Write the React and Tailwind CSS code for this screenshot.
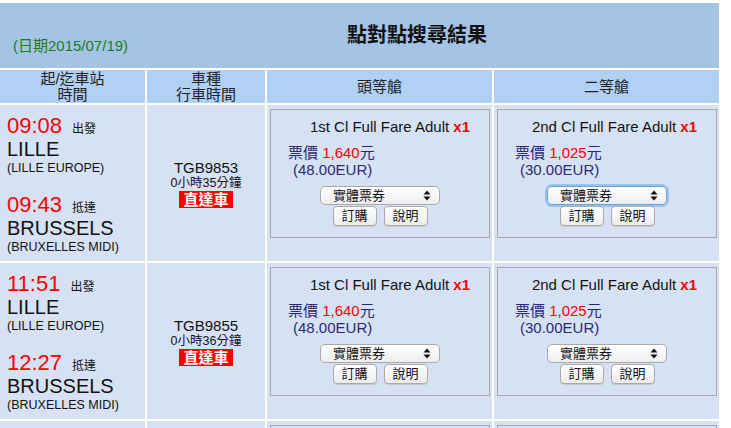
import React from 'react';

const font = { fontFamily: '"Liberation Sans", "Noto Sans CJK TC", sans-serif' };

const trains = [
  { dep: '09:08', arr: '09:43', no: 'TGB9853', dur: '0小時35分鐘', focus: true },
  { dep: '11:51', arr: '12:27', no: 'TGB9855', dur: '0小時36分鐘', focus: false },
];

function Arrows() {
  return (
    <svg width="8" height="11" viewBox="0 0 8 11" className="shrink-0">
      <path d="M4 0.5 L7.5 4.5 L0.5 4.5 Z" fill="#111" />
      <path d="M4 10.5 L7.5 6.5 L0.5 6.5 Z" fill="#111" />
    </svg>
  );
}

function FareBox({ label, price, eur, focus }) {
  return (
    <div className="border border-[#a8a8a8] h-[129px] pt-[8px]">
      <div className="text-right pr-[19px] leading-[17px] text-[15px] text-[#111]">
        {label} <b className="text-[#ff0000]">x1</b>
      </div>
      <div className="mt-[9px] pl-[17px] leading-[17px] text-[15px] text-[#2b2b73]">
        票價 <span className="text-[#ff0000]">{price}</span>元
      </div>
      <div className="pl-[22px] leading-[17px] text-[15px] text-[#2b2b73]">({eur}EUR)</div>
      <div className="mt-[8px] flex justify-center">
        <div
          className={
            'w-[120px] h-[19px] rounded-[5px] flex items-center justify-between pl-[12px] pr-[8px] text-[13px] text-[#111] bg-gradient-to-b from-white to-[#ededed] ' +
            (focus
              ? 'border border-[#6a9fd8] shadow-[0_0_0_2px_#9cc3ec]'
              : 'border border-[#a9a9a9]')
          }
        >
          <span>實體票券</span>
          <Arrows />
        </div>
      </div>
      <div className="mt-[1px] flex justify-center gap-[7px]">
        <div className="w-[44px] h-[20px] rounded-[4px] border border-[#aaaaaa] bg-gradient-to-b from-white to-[#ececec] shadow-[0_1px_0_#c8c8c8] text-[13px] text-[#111] flex items-center justify-center">
          訂購
        </div>
        <div className="w-[44px] h-[20px] rounded-[4px] border border-[#aaaaaa] bg-gradient-to-b from-white to-[#ececec] shadow-[0_1px_0_#c8c8c8] text-[13px] text-[#111] flex items-center justify-center">
          說明
        </div>
      </div>
    </div>
  );
}

function TimeLine({ time, label }) {
  return (
    <div className="h-[25px] flex items-baseline">
      <span className="text-[22px] leading-[25px] text-[#ff0000]">{time}</span>
      <span className="ml-[10px] text-[12px] leading-[14px]">{label}</span>
    </div>
  );
}

function TrainRow({ t }) {
  return (
    <div className="grid grid-cols-[145px_118px_225px_225px] gap-[2px] h-[156px]">
      <div className="bg-[#d6e2f4] pt-[8px] pl-[7px] text-[#111]">
        <TimeLine time={t.dep} label="出發" />
        <div className="h-[23px] text-[20px] leading-[23px]">LILLE</div>
        <div className="h-[14px] text-[12.5px] leading-[14px]">(LILLE EUROPE)</div>
        <div className="h-[17px]" />
        <TimeLine time={t.arr} label="抵達" />
        <div className="h-[23px] text-[20px] leading-[23px]">BRUSSELS</div>
        <div className="h-[14px] text-[12.5px] leading-[14px]">(BRUXELLES MIDI)</div>
      </div>
      <div className="bg-[#d6e2f4] flex flex-col items-center justify-center text-[#111]">
        <div className="text-[15px] leading-[17px]">{t.no}</div>
        <div className="text-[12.5px] leading-[15px]">{t.dur}</div>
        <div className="bg-[#ff0000] text-white font-bold text-[15px] leading-[17px] px-[4px]">直達車</div>
      </div>
      <div className="bg-[#d6e2f4] pt-[4px] pl-[3px] pr-[2px]">
        <FareBox label="1st Cl Full Fare Adult" price="1,640" eur="48.00" />
      </div>
      <div className="bg-[#d6e2f4] pt-[4px] pl-[3px] pr-[2px]">
        <FareBox label="2nd Cl Full Fare Adult" price="1,025" eur="30.00" focus={t.focus} />
      </div>
    </div>
  );
}

export default function App() {
  return (
    <div className="w-[731px] h-[428px] overflow-hidden bg-white pt-[3px]" style={font}>
      <div className="w-[719px] flex flex-col gap-[2px]">
        {/* title */}
        <div className="bg-[#a4c4e6] h-[65px] flex">
          <div className="w-[145px] shrink-0 flex items-end pl-[13px] pb-[11px] text-[15px] text-[#1e7a1e]">
            (日期2015/07/19)
          </div>
          <div className="flex-1 flex items-center pl-[202px] pb-[1px] text-[20px] font-bold text-[#111]">
            點對點搜尋結果
          </div>
        </div>
        {/* header */}
        <div className="grid grid-cols-[145px_118px_225px_225px] gap-[2px] h-[33px] text-[15px] leading-[16px] text-[#222]">
          <div className="bg-[#b0d1f4] flex flex-col items-center justify-center">
            <span>起/迄車站</span>
            <span>時間</span>
          </div>
          <div className="bg-[#b0d1f4] flex flex-col items-center justify-center">
            <span>車種</span>
            <span>行車時間</span>
          </div>
          <div className="bg-[#b0d1f4] flex items-center justify-center">頭等艙</div>
          <div className="bg-[#b0d1f4] flex items-center justify-center">二等艙</div>
        </div>
        {trains.map((t) => (
          <TrainRow key={t.no} t={t} />
        ))}
        {/* next row, only its top edge is in view */}
        <div className="grid grid-cols-[145px_118px_225px_225px] gap-[2px] h-[20px]">
          <div className="bg-[#d6e2f4]" />
          <div className="bg-[#d6e2f4]" />
          <div className="bg-[#d6e2f4] pt-[4px] pl-[3px] pr-[2px]">
            <div className="border border-[#a8a8a8] h-[40px]" />
          </div>
          <div className="bg-[#d6e2f4] pt-[4px] pl-[3px] pr-[2px]">
            <div className="border border-[#a8a8a8] h-[40px]" />
          </div>
        </div>
      </div>
    </div>
  );
}
